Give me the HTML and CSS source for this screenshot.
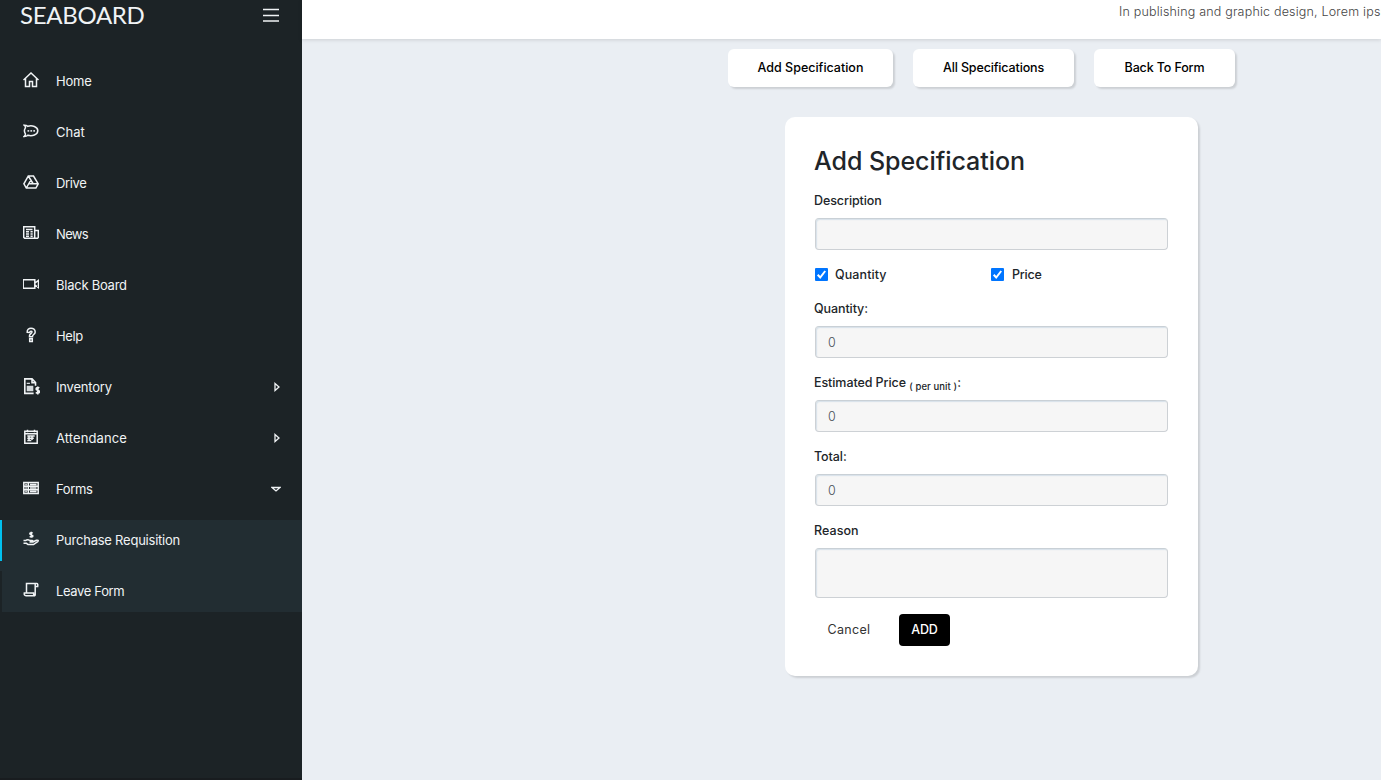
FILE: index.html
```html
<!DOCTYPE html>
<html lang="en">
<head>
<meta charset="utf-8">
<title>Seaboard - Add Specification</title>
<link rel="stylesheet" href="styles.css">
</head>
<body>
<div class="app">
  <aside class="sidebar">
    <div class="brand-row">
      <span class="brand">SEABOARD</span>
      <svg class="burger" viewBox="0 0 16 14"><path d="M0 1.500h16M0 7.500h16M0 13h16"/></svg>
    </div>
    <nav class="nav">
      <a class="item"><svg class="icon" viewBox="0 0 16 16"><path d="M.5 8 8 1l7.500 7M2.500 6.500v8h4V9.500h3v5h4v-8"/></svg><span>Home</span></a>
      <a class="item"><svg class="icon" viewBox="0 0 16 16"><path d="M1.200 2.200c1.500 0 2.800.4 3.700 1.100C9 2 14.800 3.800 14.800 7.800S9 13.400 4.900 12.200c-.9.800-2.200 1.200-3.700 1.200 1-.8 1.400-1.600 1.200-2.600-1.200-1.800-1.200-4.200 0-6 .2-1-.2-1.800-1.200-2.600z"/><path class="solid" d="M4.500 7h1.700v1.700H4.500zM7.400 7h1.700v1.700H7.400zM10.300 7H12v1.700h-1.700z"/></svg><span class="t-chat">Chat</span></a>
      <a class="item"><svg class="icon" viewBox="0 0 16 16"><path d="M5.300 2h5.200l4.700 7.800-2.300 4.200H3.300L.9 9.800zM5.300 2l5 8M8.200 5.500 3.300 14M6 9.800h9"/></svg><span class="t-tight">Drive</span></a>
      <a class="item"><svg class="icon" viewBox="0 0 16 16"><path d="M.7 1.700h11v11.600H1.700l-1-1zM11.700 5.500h3.600v7l-.8.800h-3M3 4.400h6.500M3 6.800h3M3 9h3M3 11.200h3M7.500 6.800h2.200M7.500 9h2.200M7.500 11.200h2.200"/></svg><span class="t-news">News</span></a>
      <a class="item"><svg class="icon" viewBox="0 0 16 16"><path d="M.2 3.700h11.600v8.600H.2zM12 7l3.500-2.700v7.400L12 9"/></svg><span class="t-board">Black Board</span></a>
      <a class="item"><svg class="icon" viewBox="0 0 16 16"><path d="M4.200 5.300C4 2.700 5.800 1.200 8 1.200s4.200 1.400 4.200 3.700c0 2.500-2.700 2.700-2.700 4.500v.4h-3v-1C6.500 6.500 9 6.700 9 5.100 9 4 7 3.800 6.700 5.500zM6.700 11.800h2.600v2.600H6.700z"/></svg><span class="t-tight">Help</span></a>
      <a class="item"><svg class="icon large" viewBox="0 0 16 16"><path d="M10 14.500H1.700V.8h6.800l3.300 3.500v3M8.500 .8v3.700h3.300"/><path class="solid" d="M3.500 7.300h6.200v5.200H3.500zM3.500 4.500h3v1.200h-3z"/><path d="M15.300 9.500c-.7-.7-3-.8-3 .8 0 1.500 3.200 1 3.200 2.600 0 1.500-2.500 1.500-3.400.6M13.900 8v7.500"/></svg><span>Inventory</span><svg class="caret" viewBox="0 0 8 10"><path d="M2 1.500 6 5 2 8.500z"/></svg></a>
      <a class="item"><svg class="icon" viewBox="0 0 16 16"><path d="M1.800 2.300h12.400v11.900H1.800zM1.800 4.700h12.400M4.500.8v2.400M11.500.8v2.400M4.300 7h7.400M4.300 9.300h6.500M4.300 11.500h4M6 6.500V12M9 6.500V11"/></svg><span class="t-att">Attendance</span><svg class="caret" viewBox="0 0 8 10"><path d="M2 1.500 6 5 2 8.500z"/></svg></a>
      <a class="item"><svg class="icon" viewBox="0 0 16 16"><path d="M.8 2.600h14.400v10.800H.8zM.8 6.200h14.400M.8 9.800h14.400M5.300 2.600v10.800M2.300 4.400h1.500M2.300 8h1.500M2.300 11.600h1.500M7 4.400h6.500M7 8h6.500M7 11.600h6.500"/></svg><span class="t-tight">Forms</span><svg class="caret down" viewBox="0 0 10 8"><path d="M1 2.500h8L5 6z"/></svg></a>
      <div class="submenu">
        <a class="item active"><svg class="icon" viewBox="0 0 16 16"><path d="M9.700 2.200c-.7-.7-2.900-.6-2.900.5 0 1.300 3.100.8 3.100 2.200 0 1.200-2.300 1.300-3.200.5M8.300.8v6M.5 9.500h2.200C4 8.300 5.800 8.700 7 9.500h2.300c1 0 1 1.600 0 1.600H6.500M9.800 11l3.600-1.700c1.500-.5 2.500.3 1.300 1.300L10.500 13.500H5L3.500 12.300H.5"/></svg><span class="t-pur">Purchase Requisition</span></a>
        <a class="item"><svg class="icon" viewBox="0 0 16 16"><path d="M3.500 11V1.500h10.200c1 0 1.300 1 1 3h-2.400M12.200 1.800v11.900M12.200 13.700H3c-1.600 0-2-1-1.700-2.700h9.200c0 2 .4 2.700 1.700 2.700"/></svg><span class="t-tight">Leave Form</span></a>
      </div>
    </nav>
  </aside>
  <main class="main">
    <header class="topbar"><span class="ticker">In publishing and graphic design, Lorem ipsum</span></header>
    <div class="tabs">
      <button class="tab tab-add">Add Specification</button>
      <button class="tab tab-all">All Specifications</button>
      <button class="tab tab-back">Back To Form</button>
    </div>
    <form class="card">
      <h1 class="title">Add Specification</h1>
      <label class="label l-wide">Description</label>
      <input class="field" type="text">
      <div class="checks">
        <label class="check"><svg class="box" viewBox="0 0 13 13"><rect width="13" height="13" rx="1"/><path d="m2.700 6.800 2.500 2.700 5-6.500"/></svg><span class="l-check">Quantity</span></label>
        <label class="check"><svg class="box" viewBox="0 0 13 13"><rect width="13" height="13" rx="1"/><path d="m2.700 6.800 2.500 2.700 5-6.500"/></svg><span>Price</span></label>
      </div>
      <label class="label l-wide">Quantity:</label>
      <input class="field" type="text" value="0">
      <label class="label l-est">Estimated Price <sub class="unit">( per unit )</sub>:</label>
      <input class="field" type="text" value="0">
      <label class="label l-wide">Total:</label>
      <input class="field" type="text" value="0">
      <label class="label l-reason">Reason</label>
      <textarea class="field area"></textarea>
      <div class="actions">
        <button class="btn cancel" type="button">Cancel</button>
        <button class="btn add" type="button">ADD</button>
      </div>
    </form>
  </main>
</div>
</body>
</html>
```
FILE: styles.css
```css
* { box-sizing: border-box; }
body { margin: 0; font-family: Inter, "Open Sans", sans-serif; font-size: 13px; color: #212529; background: #eaeef3; }
.app { display: flex; width: 1381px; height: 780px; overflow: hidden; }

.sidebar { width: 302px; flex: none; background: #1c2326; color: #f0f3f5; border-bottom: 2px solid #181c1f; }
.brand-row { height: 61px; padding: 0 23px 0 20px; display: flex; justify-content: space-between; align-items: flex-start; }
.brand { font-family: Lato, sans-serif; font-size: 24px; line-height: 30px; letter-spacing: -0.3px; }
.burger { width: 16px; height: 14px; margin-top: 8px; fill: none; stroke: #f0f3f5; stroke-width: 1.6; }
.nav { display: flex; flex-direction: column; gap: 10px; }
.item { display: flex; align-items: center; height: 41px; padding: 0 21px 1px 21px; border-left: 2px solid transparent; letter-spacing: -0.2px; }
.icon { width: 16px; height: 16px; margin: 0 17px 2px 0; flex: none; fill: none; stroke: #f0f3f5; stroke-width: 1.5; }
.icon.large { width: 17px; height: 17px; margin-right: 16px; }
.icon .solid { fill: #d5dadd; stroke: none; }
.t-tight { letter-spacing: -0.35px; }
.t-chat { letter-spacing: 0; }
.t-news { letter-spacing: -0.65px; }
.t-board { letter-spacing: -0.25px; }
.t-att { letter-spacing: .1px; }
.t-pur { letter-spacing: -0.23px; }
.caret { width: 8px; height: 10px; margin-left: auto; fill: none; stroke: #f0f3f5; stroke-width: 1.3; }
.caret.down { width: 10px; height: 8px; }
.submenu { display: flex; flex-direction: column; gap: 10px; background: #222d32; }
.submenu .item { border-left-color: #1c2326; }
.submenu .active { border-left-color: #00c0ef; }

.main { flex: 1; min-width: 0; }
.topbar { height: 39px; padding: 4px 0 0 817px; background: #fff; box-shadow: 0 1px 4px rgba(0, 0, 0, .13); white-space: nowrap; overflow: hidden; }
.ticker { display: block; font-size: 12.500px; line-height: 16px; letter-spacing: .19px; font-weight: 300; color: #444; }
.tabs { display: flex; gap: 20px; margin: 10px 0 0 426px; }
.tab { height: 38px; padding: 0 0 1px; border: 0; border-radius: 6px; background: #fff; color: #000; font: 500 12.500px Inter, sans-serif; box-shadow: 2px 2px 2px rgba(0, 0, 0, .13); letter-spacing: -0.14px; }
.tab-add { width: 165px; letter-spacing: 0; }
.tab-all { width: 161px; }
.tab-back { width: 141px; }

.card { display: flex; flex-direction: column; width: 413px; height: 559px; margin: 30px 0 0 483px; padding: 30px; background: #fff; border-radius: 10px; box-shadow: 2px 2px 2px rgba(0, 0, 0, .13); }
.title { margin: 0 0 0 -1px; height: 44px; font-size: 25px; line-height: 28px; font-weight: 500; letter-spacing: -0.05px; }
.label { display: block; height: 19px; margin: 0 0 8px -1px; font-size: 12.500px; line-height: 19px; font-weight: 500; letter-spacing: -0.2px; }
.l-wide { letter-spacing: -0.08px; }
.l-check { letter-spacing: .1px; margin-left: -1px; }
.l-est { letter-spacing: -0.08px; }
.l-reason { letter-spacing: .05px; }
.unit { position: relative; top: -1px; font-size: 9.500px; line-height: 0; letter-spacing: .1px; }
.field { width: 353px; height: 32px; margin: 0 0 15px; padding: 0 12px; border: 1px solid #cdd1d5; border-top-color: #c9d0d6; border-radius: 4px; background: #f6f6f6; color: #495057; font: 300 12.500px Inter, sans-serif; box-shadow: inset 1px 1px 1px #d7e2ea; }
.area { height: 50px; resize: none; display: block; margin-bottom: 16px; }
.checks { display: grid; grid-template-columns: 176px 1fr; height: 19px; margin-bottom: 15px; }
.check { display: flex; align-items: center; gap: 8px; font-size: 12.500px; font-weight: 500; letter-spacing: -0.2px; }
.box { width: 13px; height: 13px; }
.box rect { fill: #0075ff; }
.box path { fill: none; stroke: #fff; stroke-width: 2; }
.actions { display: flex; gap: 16px; }
.btn { height: 32px; padding: 0 0 1px; border: 0; border-radius: 4px; font: 500 12.500px Inter, sans-serif; letter-spacing: -0.2px; }
.cancel { width: 68px; background: none; color: #333; font-weight: 400; letter-spacing: .3px; }
.add { width: 51px; background: #000; color: #fff; }
```
